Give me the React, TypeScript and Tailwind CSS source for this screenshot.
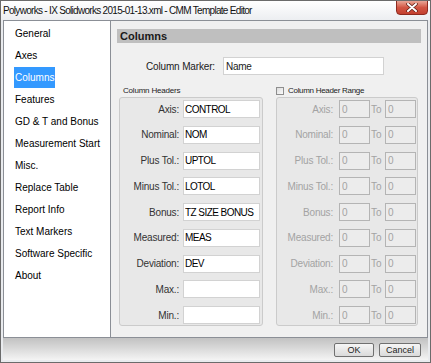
import React from 'react';

const navItems = [
  'General',
  'Axes',
  'Columns',
  'Features',
  'GD & T and Bonus',
  'Measurement Start',
  'Misc.',
  'Replace Table',
  'Report Info',
  'Text Markers',
  'Software Specific',
  'About',
];

const headers = [
  { label: 'Axis:', value: 'CONTROL' },
  { label: 'Nominal:', value: 'NOM' },
  { label: 'Plus Tol.:', value: 'UPTOL' },
  { label: 'Minus Tol.:', value: 'LOTOL' },
  { label: 'Bonus:', value: 'TZ SIZE BONUS' },
  { label: 'Measured:', value: 'MEAS' },
  { label: 'Deviation:', value: 'DEV' },
  { label: 'Max.:', value: '' },
  { label: 'Min.:', value: '' },
];

export default function App() {
  return (
    <div className="w-[431px] h-[363px] flex flex-col overflow-hidden border border-[#6b6b6b] bg-[#e9ebee] text-black [font-family:'Liberation_Sans',Arial,sans-serif]">
      {/* Title bar */}
      <div className="h-[19px] flex items-start justify-between bg-gradient-to-b from-[#ffffff] to-[#eceef1]">
        <span className="pl-[2px] pt-[3px] text-[10px] leading-[13px] tracking-[-0.7px] text-[#111]">
          Polyworks - IX Solidworks 2015-01-13.xml - CMM Template Editor
        </span>
        <div className="mr-[2px] -mt-px w-[32px] h-[15px] flex items-center justify-center rounded-b-[4px] border border-[#8d2a1f] bg-gradient-to-b from-[#e8a596] via-[#d25543] to-[#c3402f]">
          <svg width="12" height="9" viewBox="0 0 12 9">
            <path d="M2 1 L10 8 M10 1 L2 8" stroke="#5a1a12" strokeWidth="3.4" strokeLinecap="round" />
            <path d="M2 1 L10 8 M10 1 L2 8" stroke="#ffffff" strokeWidth="2" strokeLinecap="round" />
          </svg>
        </div>
      </div>

      <div className="flex-1 flex flex-col px-[2px] pb-[2px]">
        <div className="h-[318px] flex border border-[#8b8f96]">
          {/* Navigation list */}
          <div className="w-[107px] bg-white border-r border-[#8b8f96] pt-[1px] pl-[10px] text-[10px]">
            {navItems.map((item) => (
              <div key={item} className="h-[22px] flex items-center">
                {item === 'Columns' ? (
                  <span className="h-[21px] leading-[21px] px-[1px] bg-[#3399ff] text-white">{item}</span>
                ) : (
                  <span className="px-[1px]">{item}</span>
                )}
              </div>
            ))}
          </div>

          {/* Page */}
          <div className="flex-1 bg-[#f0f0f0] flex flex-col px-[6px] pt-[8px] text-[10px] text-[#1a1a1a]">
            <div className="h-[14px] bg-[#bfbfbf] pl-[3px] text-[11px] leading-[14px] font-bold">Columns</div>

            <div className="mt-[14px] h-[18px] flex items-center">
              <span className="w-[98px] text-right tracking-[-0.15px]">Column Marker:</span>
              <input
                readOnly
                value="Name"
                className="ml-[8px] w-[161px] h-[18px] px-[2px] bg-white border border-[#d2d2d2] tracking-[-0.3px] outline-none"
              />
            </div>

            <div className="mt-[9px] ml-[2px] flex gap-[13px]">
              {/* Column headers */}
              <div className="w-[144px]">
                <div className="h-[13px] pl-[4px] text-[8px] leading-[13px] tracking-[-0.2px] text-[#222]">Column Headers</div>
                <div className="h-[229px] rounded-[3px] border border-[#cbcbcb] bg-[#e8e8e8] pt-[2px] pr-[2px] flex flex-col gap-[7.75px]">
                  {headers.map((h) => (
                    <div key={h.label} className="h-[18px] flex items-center">
                      <span className="w-[59px] text-right text-[#333] tracking-[-0.2px]">{h.label}</span>
                      <input
                        readOnly
                        value={h.value}
                        className="ml-[4px] w-[77px] h-[18px] px-[1px] bg-white border border-[#d2d2d2] text-black tracking-[-0.55px] outline-none"
                      />
                    </div>
                  ))}
                </div>
              </div>

              {/* Column header range */}
              <div className="w-[142px]">
                <div className="h-[13px] flex items-center">
                  <span className="w-[8px] h-[8px] border border-[#8e8e8e] bg-gradient-to-br from-[#dcdcdc] to-[#fbfbfb]" />
                  <span className="ml-[4px] text-[8px] leading-[13px] tracking-[-0.3px] text-[#222]">Column Header Range</span>
                </div>
                <div className="h-[229px] rounded-[3px] border border-[#cbcbcb] bg-[#e8e8e8] pt-[2px] pr-[1px] flex flex-col gap-[7.75px] text-[#a3a3a3]">
                  {headers.map((h) => (
                    <div key={h.label} className="h-[18px] flex items-center">
                      <span className="w-[56px] text-right tracking-[-0.2px]">{h.label}</span>
                      <input
                        readOnly
                        value="0"
                        className="ml-[6px] w-[31px] h-[18px] px-[2px] bg-[#ececec] border border-[#b4b4b4] text-[#a3a3a3] outline-none"
                      />
                      <span className="w-[15px] pl-[1px]">To</span>
                      <input
                        readOnly
                        value="0"
                        className="w-[31px] h-[18px] px-[2px] bg-[#ececec] border border-[#b4b4b4] text-[#a3a3a3] outline-none"
                      />
                    </div>
                  ))}
                </div>
              </div>
            </div>
          </div>
        </div>

        {/* Button bar */}
        <div className="h-[22px] flex justify-end items-start gap-[5px] pt-[5px] pr-[7px] bg-gradient-to-b from-[#c2c2c2] to-[#f4f4f4]">
          <button className="w-[40px] h-[14px] rounded-[2px] border border-[#707070] bg-gradient-to-b from-[#f6f6f6] to-[#dadada] text-[9px] leading-[12px] text-[#222]">
            OK
          </button>
          <button className="w-[42px] h-[14px] rounded-[2px] border border-[#707070] bg-gradient-to-b from-[#f6f6f6] to-[#dadada] text-[9px] leading-[12px] text-[#222]">
            Cancel
          </button>
        </div>
      </div>
    </div>
  );
}
